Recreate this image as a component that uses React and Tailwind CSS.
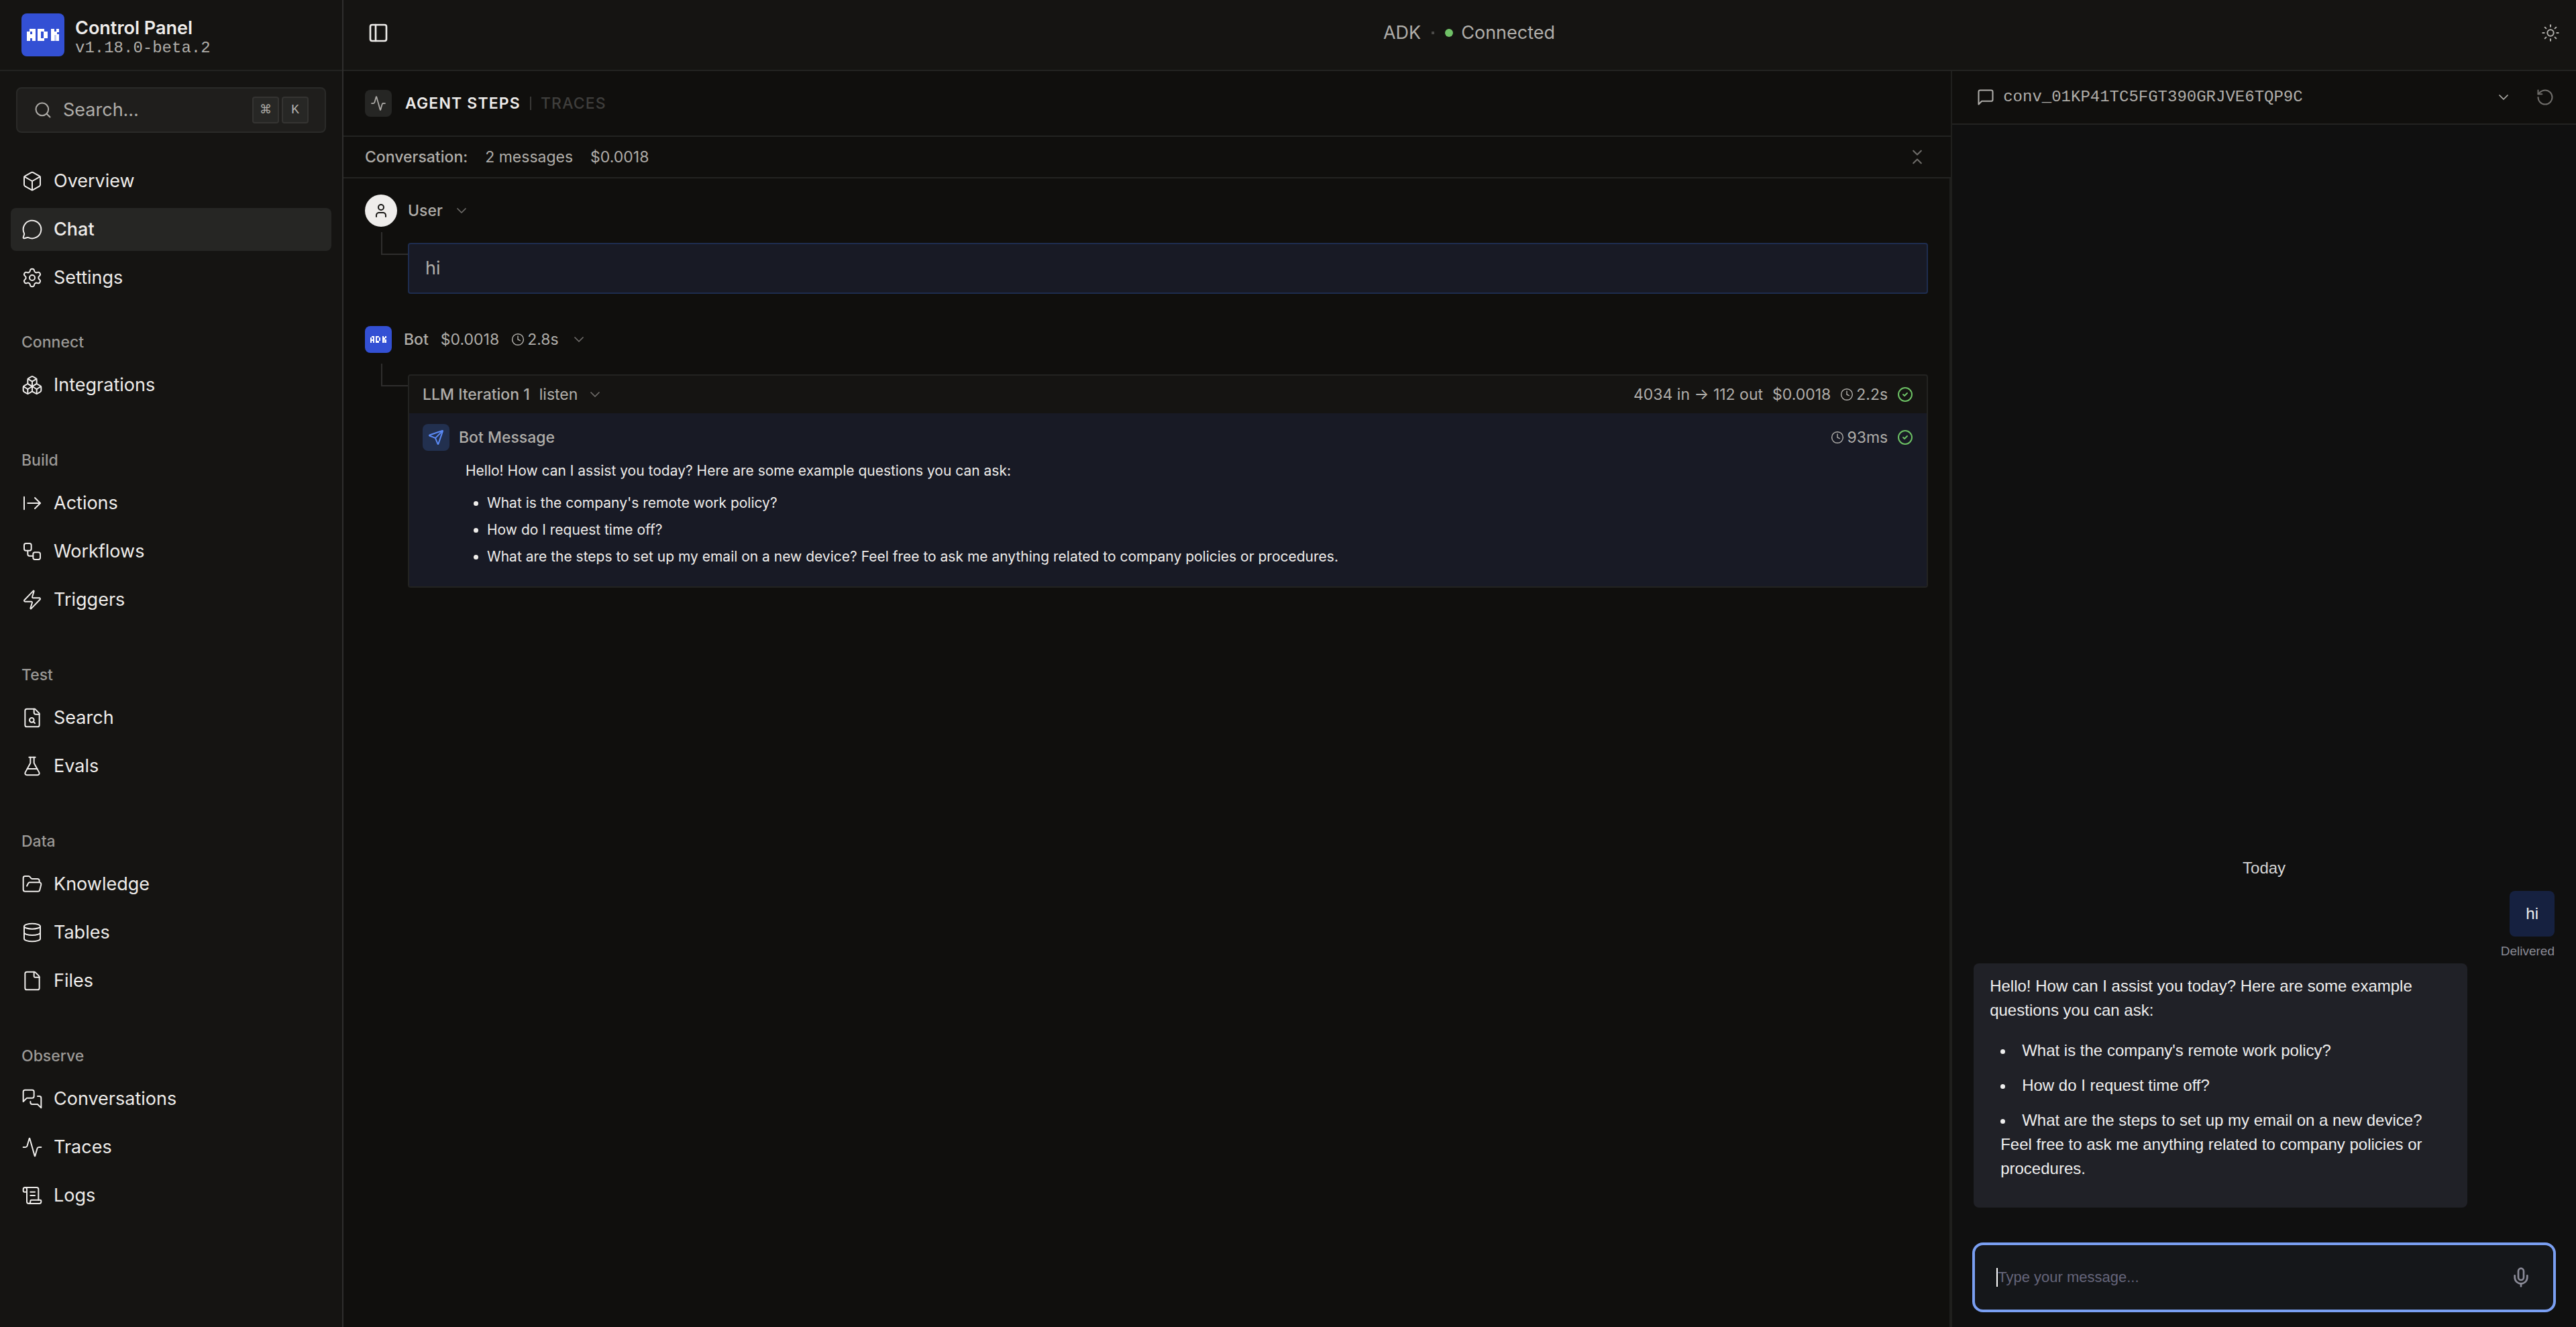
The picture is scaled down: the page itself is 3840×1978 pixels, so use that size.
import {
  Activity,
  ArrowRightFromLine,
  Box,
  Boxes,
  ChevronDown,
  ChevronsDownUp,
  CircleCheck,
  Clock,
  Database,
  File,
  FlaskConical,
  FolderOpen,
  MessageCircle,
  Mic,
  PanelLeft,
  RotateCcw,
  ScrollText,
  Search,
  Send,
  Settings,
  Sun,
  User,
  Workflow,
  Zap,
} from 'lucide-react'

function LineIcon({ className, strokeWidth, children }) {
  return (
    <svg
      className={className}
      viewBox="0 0 24 24"
      fill="none"
      stroke="currentColor"
      strokeWidth={strokeWidth}
      strokeLinecap="round"
      strokeLinejoin="round"
      aria-hidden="true"
    >
      {children}
    </svg>
  )
}

function MessageIcon(props) {
  return (
    <LineIcon {...props}>
      <path d="M21 15a2 2 0 0 1-2 2H7l-4 4V5a2 2 0 0 1 2-2h14a2 2 0 0 1 2 2z" />
    </LineIcon>
  )
}

function MessagesIcon(props) {
  return (
    <LineIcon {...props}>
      <path d="M14 9a2 2 0 0 1-2 2H6l-4 4V4a2 2 0 0 1 2-2h8a2 2 0 0 1 2 2z" />
      <path
        d="M18 9h2a2 2 0 0 1 2 2v11l-4-4h-6a2 2 0 0 1-2-2v-1"
      />
    </LineIcon>
  )
}

function FileSearchIcon(props) {
  return (
    <LineIcon {...props}>
      <path d="M15 2H6a2 2 0 0 0-2 2v16a2 2 0 0 0 2 2h12a2 2 0 0 0 2-2V7z" />
      <path d="M14 2v4a2 2 0 0 0 2 2h4" />
      <circle cx="11.5" cy="14.5" r="2.5" />
      <path d="M13.3 16.3 15 18" />
    </LineIcon>
  )
}

const mainNav = [
  { label: 'Overview', icon: Box },
  { label: 'Chat', icon: MessageCircle, active: true },
  { label: 'Settings', icon: Settings },
]

const navGroups = [
  { title: 'Connect', items: [{ label: 'Integrations', icon: Boxes }] },
  {
    title: 'Build',
    items: [
      { label: 'Actions', icon: ArrowRightFromLine },
      { label: 'Workflows', icon: Workflow },
      { label: 'Triggers', icon: Zap },
    ],
  },
  {
    title: 'Test',
    items: [
      { label: 'Search', icon: FileSearchIcon },
      { label: 'Evals', icon: FlaskConical },
    ],
  },
  {
    title: 'Data',
    items: [
      { label: 'Knowledge', icon: FolderOpen },
      { label: 'Tables', icon: Database },
      { label: 'Files', icon: File },
    ],
  },
  {
    title: 'Observe',
    items: [
      { label: 'Conversations', icon: MessagesIcon },
      { label: 'Traces', icon: Activity },
      { label: 'Logs', icon: ScrollText },
    ],
  },
]

const questions = [
  "What is the company's remote work policy?",
  'How do I request time off?',
  'What are the steps to set up my email on a new device? Feel free to ask me anything related to company policies or procedures.',
]

const greeting =
  'Hello! How can I assist you today? Here are some example questions you can ask:'

// viewBox decides how much blue is left round the mark
function Logo({ className, viewBox = '0 0 192 192' }) {
  return (
    <svg className={className} viewBox={viewBox} aria-hidden="true">
      <g fill="#ffffff" shapeRendering="crispEdges">
        <rect x="37" y="68" width="26" height="13" />
        <rect x="25" y="81" width="14" height="42" />
        <rect x="49" y="81" width="14" height="42" />
        <rect x="37" y="94" width="14" height="16" />
        <rect x="73" y="68" width="15" height="55" />
        <rect x="73" y="68" width="30" height="13" />
        <rect x="100" y="80" width="17" height="30" />
        <rect x="73" y="110" width="30" height="13" />
        <rect x="132" y="68" width="14" height="55" />
        <rect x="156" y="68" width="12" height="15" />
        <rect x="145" y="81" width="13" height="15" />
        <rect x="156" y="94" width="12" height="29" />
        <rect x="145" y="96" width="12" height="27" opacity="0.7" />
      </g>
    </svg>
  )
}

function NavItem({ label, icon: Icon, active }) {
  return (
    <li>
      <a
        href="#"
        className={
          active
            ? 'flex h-16 items-center gap-4 rounded-lg bg-[#262624] px-4 font-medium'
            : 'flex h-16 items-center gap-4 rounded-lg px-4'
        }
      >
        <Icon className="size-8 shrink-0" strokeWidth={1.5} />
        {label}
      </a>
    </li>
  )
}

function Sidebar() {
  return (
    <aside className="flex w-[512px] shrink-0 flex-col border-r-2 border-[#2f2e2d] bg-[#151412] text-[27px] leading-8 text-[#eeecea]">
      <div className="flex h-[106px] shrink-0 items-start gap-4 border-b-2 border-[#232321] px-8 pt-5">
        <Logo className="size-16 shrink-0 rounded-lg bg-[#3350d4]" />
        <div className="pt-2">
          <h1 className="leading-7 font-semibold">Control Panel</h1>
          <p className="font-['Liberation_Mono',monospace] text-[24px] text-[#b0aeaa]">
            v1.18.0-beta.2
          </p>
        </div>
      </div>

      <button
        type="button"
        className="mx-6 mt-6 flex h-[68px] shrink-0 items-center rounded-lg border-2 border-[#2a2a28] bg-[#1f1e1c] px-6 text-[#b0aeaa]"
      >
        <Search className="size-7" strokeWidth={1.75} />
        <span className="ml-4 flex-1 text-left">Search…</span>
        <span className="flex gap-1 text-[20px]">
          <kbd className="flex size-10 items-center justify-center rounded border-2 border-[#353432] bg-[#272725] font-['Liberation_Mono','DejaVu_Sans',monospace] text-[18px]">
            ⌘
          </kbd>
          <kbd className="flex size-10 items-center justify-center rounded border-2 border-[#353432] bg-[#272725] font-['Liberation_Mono',monospace]">
            K
          </kbd>
        </span>
      </button>

      <nav className="mt-10 px-4">
        <ul className="flex flex-col gap-2">
          {mainNav.map((item) => (
            <NavItem key={item.label} {...item} />
          ))}
        </ul>

        <div className="mt-8 flex flex-col gap-12">
          {navGroups.map((group) => (
            <section key={group.title}>
              <h2 className="px-4 text-[23px] leading-[64px] font-medium text-[#9b9996]">
                {group.title}
              </h2>
              <ul className="flex flex-col gap-2">
                {group.items.map((item) => (
                  <NavItem key={item.label} {...item} />
                ))}
              </ul>
            </section>
          ))}
        </div>
      </nav>
    </aside>
  )
}

function Header() {
  return (
    <header className="flex h-[106px] shrink-0 items-center border-b-2 border-[#232321] bg-[#151412] pr-6 pb-1.5 pl-9 text-[27px] leading-8 text-[#b0aeaa]">
      <button type="button" className="mr-3 text-[#eeecea]" aria-label="Toggle sidebar">
        <PanelLeft className="size-8" strokeWidth={2} />
      </button>
      <div className="flex flex-1 items-center justify-center gap-4">
        <span>ADK</span>
        <span className="size-1 bg-[#4a4947]" />
        <span className="flex items-center gap-3">
          <span className="size-3 rounded-full bg-[#70c167]" />
          Connected
        </span>
      </div>
      <button type="button" aria-label="Toggle theme">
        <Sun className="size-7" strokeWidth={1.75} />
      </button>
    </header>
  )
}

function Duration({ value }) {
  return (
    <span className="flex items-center gap-1">
      <Clock className="size-5" strokeWidth={1.75} />
      {value}
    </span>
  )
}

function Toggle() {
  return (
    <button type="button" className="text-[#6f6d6a]" aria-label="Collapse">
      <ChevronDown className="size-6" strokeWidth={1.75} />
    </button>
  )
}

function Connector() {
  return <div className="ml-6 h-[34px] w-10 shrink-0 border-b-2 border-l-2 border-[#2f2e2d]" />
}

function StepsPanel() {
  return (
    <main className="flex min-w-0 flex-1 flex-col text-[23px] leading-8 text-[#b0aeaa]">
      <div className="flex h-[98px] shrink-0 items-center border-b-2 border-[#232321] px-8">
        <span className="mr-5 flex size-10 items-center justify-center rounded-lg bg-[#262624]">
          <Activity className="size-6" strokeWidth={1.75} />
        </span>
        <button type="button" className="font-semibold tracking-wider text-[#eeecea]">
          AGENT STEPS
        </button>
        <span className="mx-3.5 h-5 w-0.5 bg-[#3a3937]" />
        <button type="button" className="font-medium tracking-wider text-[#3f3e3c]">
          TRACES
        </button>
      </div>

      <div className="flex h-[62px] shrink-0 items-center gap-[26px] border-b-2 border-[#232321] pr-9 pl-8">
        <span className="font-medium">Conversation:</span>
        <span>2 messages</span>
        <span>$0.0018</span>
        <button type="button" className="ml-auto text-[#6f6d6a]" aria-label="Collapse all">
          <ChevronsDownUp className="size-7" strokeWidth={1.75} />
        </button>
      </div>

      <div className="flex-1 border-r-2 border-[#1f1f1d] px-8 pt-6">
        <section>
          <div className="flex h-12 items-center gap-4">
            <span className="flex size-12 items-center justify-center rounded-full bg-[#efedeb] text-[#151412]">
              <User className="size-6" />
            </span>
            <span className="font-medium">User</span>
            <Toggle />
          </div>
          <div className="mt-2 flex">
            <Connector />
            <p className="mt-4 flex-1 rounded border-2 border-[#1e2d4f] bg-[#181a25] px-6 py-5 text-[27px]">
              hi
            </p>
          </div>
        </section>

        <section className="mt-11">
          <div className="flex h-12 items-center gap-[18px]">
            <Logo className="size-10 rounded-lg bg-[#3350d4]" viewBox="-21 -22 236 236" />
            <span className="font-medium">Bot</span>
            <span>$0.0018</span>
            <Duration value="2.8s" />
            <Toggle />
          </div>
          <div className="mt-3 flex">
            <Connector />
            <div className="mt-4 flex-1 overflow-hidden rounded border-2 border-[#232321] bg-[#151412]">
              <div className="flex h-14 items-center gap-3.5 px-5">
                <span className="font-medium">LLM Iteration 1</span>
                <span>listen</span>
                <Toggle />
                <span className="ml-auto">4034 in → 112 out</span>
                <span>$0.0018</span>
                <Duration value="2.2s" />
                <CircleCheck className="size-6 text-[#6cc064]" />
              </div>
              <div className="bg-[#181a25] px-5 pt-4 pb-6">
                <div className="flex h-10 items-center gap-3.5">
                  <span className="flex size-10 items-center justify-center rounded-lg bg-[#22304f] text-[#5b8af5]">
                    <Send className="size-6" />
                  </span>
                  <span className="font-medium">Bot Message</span>
                  <span className="ml-auto">
                    <Duration value="93ms" />
                  </span>
                  <CircleCheck className="size-6 text-[#6cc064]" />
                </div>
                <div className="mt-2.5 pl-16 text-[21px] leading-10 text-[#eeecea]">
                  <p className="mb-2">{greeting}</p>
                  <ul className="list-disc pl-8">
                    {questions.map((question) => (
                      <li key={question}>{question}</li>
                    ))}
                  </ul>
                </div>
              </div>
            </div>
          </div>
        </section>
      </div>
    </main>
  )
}

function ChatPanel() {
  return (
    <aside className="flex w-[28%] shrink-0 flex-col border-l-2 border-[#1f1f1d] bg-[#101010] font-['Liberation_Sans',Arial,sans-serif] text-[24px] leading-9 text-[#eeeeee]">
      <div className="flex h-20 shrink-0 items-center border-b-2 border-[#232321] bg-[#100f0d] pr-8 pl-9 text-[#b0aeaa]">
        <label className="flex flex-1 items-center">
          <MessageIcon className="size-7 shrink-0" strokeWidth={1.75} />
          <select
            aria-label="Conversation"
            className="ml-3 flex-1 appearance-none font-['Liberation_Mono',monospace] outline-none"
          >
            <option>conv_01KP41TC5FGT390GRJVE6TQP9C</option>
          </select>
          <ChevronDown className="size-6" strokeWidth={1.75} />
        </label>
        <button type="button" className="ml-9 text-[#6f6d6a]" aria-label="Restart conversation">
          <RotateCcw className="size-7" strokeWidth={1.75} />
        </button>
      </div>

      <div className="flex flex-1 flex-col justify-end px-8">
        <p className="mb-4 text-center text-[#d6d6d6]">Today</p>
        <p className="self-end rounded-lg bg-[#162140] px-6 py-4">hi</p>
        <p className="mt-1.5 mb-0.5 self-end text-[19px] leading-8 text-[#8b8b96]">Delivered</p>
        <div className="w-[85%] rounded-lg bg-[#202127] px-6 py-4">
          <p>{greeting}</p>
          <ul className="my-6 flex list-inside list-disc flex-col gap-4 pl-4">
            {questions.map((question) => (
              <li key={question}>{question}</li>
            ))}
          </ul>
        </div>
      </div>

      <form className="mx-[30px] mt-[52px] mb-[22px] flex h-[104px] shrink-0 items-center rounded-2xl border-4 border-[#7a9ff2] bg-[#15171a] px-8">
        <span className="h-7 w-0.5 bg-white" />
        <input
          type="text"
          aria-label="Message"
          placeholder="Type your message..."
          className="min-w-0 flex-1 text-[22px] outline-none placeholder:text-[#65657a]"
        />
        <button type="button" className="text-[#8b8b98]" aria-label="Record voice message">
          <Mic className="size-8" />
        </button>
      </form>
    </aside>
  )
}

export default function App() {
  return (
    <div className="flex h-screen bg-[#100f0d] font-[Inter,sans-serif]">
      <Sidebar />
      <div className="flex min-w-0 flex-1 flex-col">
        <Header />
        <div className="flex min-h-0 flex-1">
          <StepsPanel />
          <ChatPanel />
        </div>
      </div>
    </div>
  )
}
